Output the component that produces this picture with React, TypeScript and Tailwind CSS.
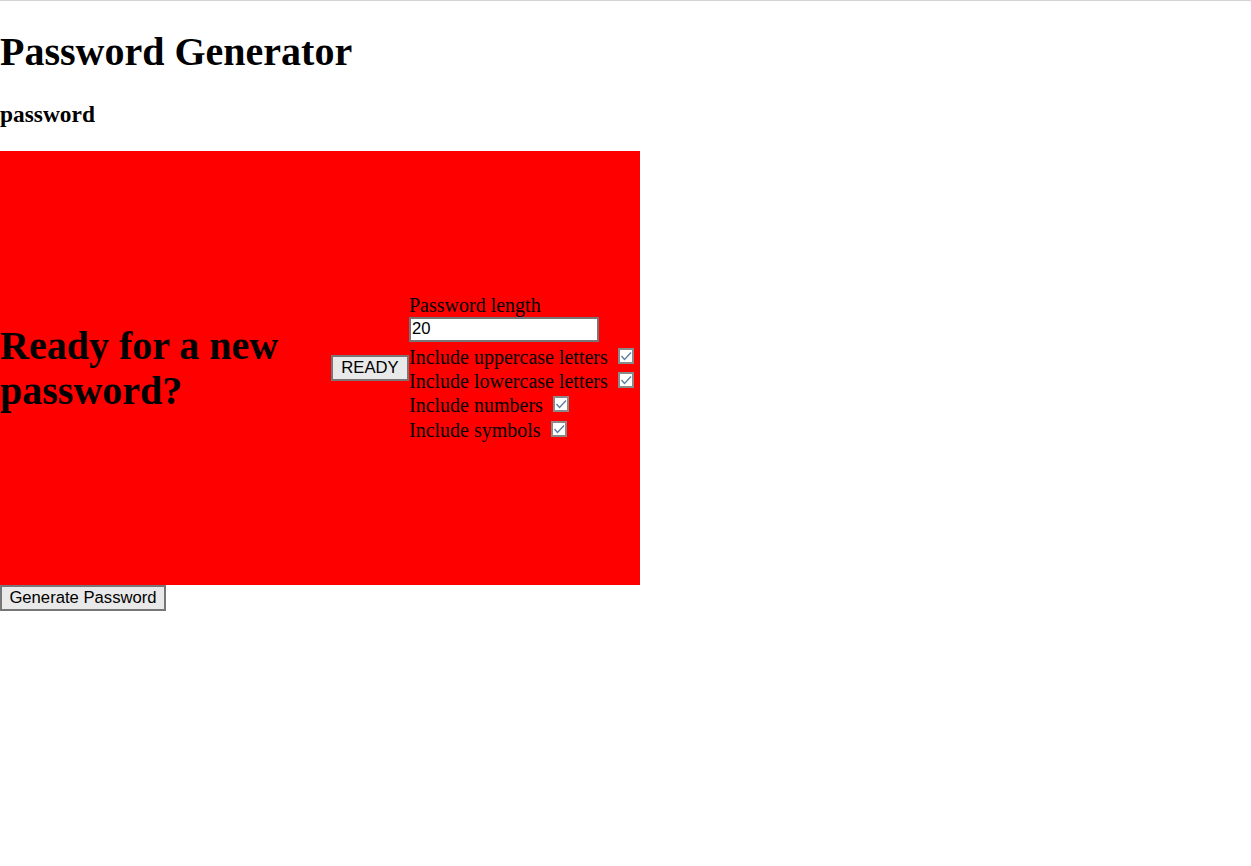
import React from "react";

const Check: React.FC = () => (
  <span className="ml-[10px] inline-block h-[16px] w-[16px] shrink-0 border-2 border-[#8a8a8a] bg-white align-baseline">
    <svg viewBox="0 0 12 12" className="block h-[12px] w-[12px]">
      <path d="M1.5 6 L4.5 9.5 L11 2.5" fill="none" stroke="#5b7aa3" strokeWidth="1.3" />
    </svg>
  </span>
);

const options = [
  { label: "Include uppercase letters", row: "h-[24px] leading-[24px]" },
  { label: "Include lowercase letters", row: "h-[24px] leading-[24px]" },
  { label: "Include numbers", row: "h-[25px] leading-[25px]" },
  { label: "Include symbols", row: "h-[25px] leading-[25px]" },
];

export default function App() {
  return (
    <div className="min-h-[866px] border-t border-[#d3d3d3] bg-white font-['Liberation_Serif',serif] text-[20px] text-black">
      <h1 className="mt-[29px] h-[44px] text-[40px] font-bold leading-[44px]">Password Generator</h1>
      <h3 className="mt-[27px] h-[26px] text-[23.4px] font-bold leading-[26px]">password</h3>
      <div className="mt-[24px] flex h-[434px] w-[640px] items-center bg-[#ff0000]">
        <h1 className="w-[331px] shrink-0 text-[40px] font-bold leading-[45px]">Ready for a new password?</h1>
        <button className="h-[26px] w-[78px] shrink-0 border-2 border-[#767676] bg-[#e9e9e9] font-['Liberation_Sans',sans-serif] text-[16.67px] leading-none text-black">
          READY
        </button>
        <div className="flex flex-col">
          <div className="h-[22px] leading-[22px]">Password length</div>
          <input
            type="text"
            defaultValue="20"
            className="mt-px h-[25px] w-[190px] border-2 border-[#767676] bg-white pl-px font-['Liberation_Sans',sans-serif] text-[16.67px] text-black outline-none"
          />
          <div className="mt-[3px]">
            {options.map((o) => (
              <div key={o.label} className={o.row}>
                {o.label}
                <Check />
              </div>
            ))}
          </div>
        </div>
      </div>
      <button className="block h-[26px] w-[166px] border-2 border-[#767676] bg-[#e9e9e9] font-['Liberation_Sans',sans-serif] text-[16.67px] leading-none text-black">
        Generate Password
      </button>
    </div>
  );
}
